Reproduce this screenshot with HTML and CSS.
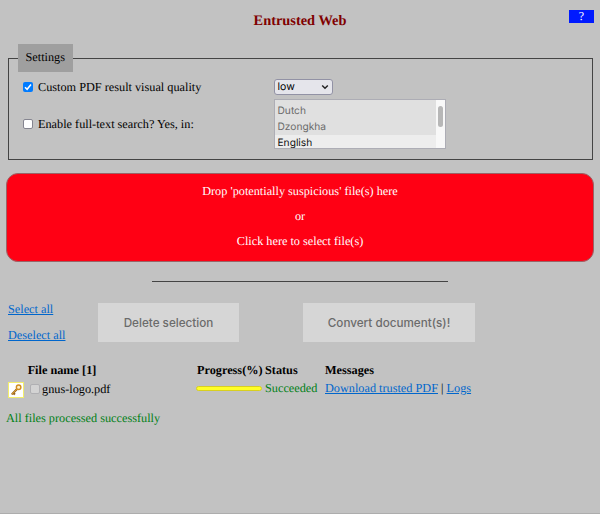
FILE: index.html
```html
<!DOCTYPE html>
<html lang="en">
<head>
<meta charset="utf-8">
<title>Entrusted Web</title>
<link rel="stylesheet" href="styles.css">
</head>
<body>
<header class="header">
  <h1>Entrusted Web</h1>
  <a class="help">?</a>
</header>
<fieldset class="settings">
  <legend>Settings</legend>
  <div class="setting quality">
    <label><span class="check on"><svg viewBox="0 0 10 10"><path d="M2 5.2 4.1 7.3 8 2.5"/></svg></span><span>Custom PDF result visual quality</span></label>
    <div class="select">low<svg viewBox="0 0 8 6"><path d="M1.2 1.4 4 4.3 6.8 1.4"/></svg></div>
  </div>
  <div class="setting languages">
    <label><span class="check"></span><span>Enable full-text search? Yes, in:</span></label>
    <div class="listbox">
      <div class="options"><div>Dutch</div><div>Dzongkha</div><div class="current">English</div></div>
      <div class="track"><div class="thumb"></div></div>
    </div>
  </div>
</fieldset>
<section class="dropzone">
  <p>Drop 'potentially suspicious' file(s) here</p>
  <p>or</p>
  <p>Click here to select file(s)</p>
</section>
<hr class="divider">
<section class="actions">
  <div class="selection"><a>Select all</a><a>Deselect all</a></div>
  <button class="delete" disabled>Delete selection</button>
  <button class="convert" disabled>Convert document(s)!</button>
</section>
<section class="files">
  <div class="row head"><span></span><b>File name [1]</b><b>Progress(%)</b><b>Status</b><b>Messages</b></div>
  <div class="row file">
    <span class="key"><svg viewBox="0 0 16 16"><path class="edge" d="M9.2 6.8 3.2 13M4.8 11.3l2 1.8"/><path class="shaft" d="M9.2 6.8 3.2 13"/><circle cx="11" cy="4.8" r="2.6"/></svg></span>
    <span class="name"><span class="check disabled"></span><span>gnus-logo.pdf</span></span>
    <span class="progress"></span>
    <span class="ok">Succeeded</span>
    <span class="links"><a>Download trusted PDF</a> | <a>Logs</a></span>
  </div>
</section>
<p class="ok summary">All files processed successfully</p>
</body>
</html>
```
FILE: styles.css
```css
* { box-sizing: border-box; }
html { background: #c2c2c2; }
body { margin: 0; height: 514px; overflow: hidden; border-bottom: 1px solid #adadad; background: #c2c2c2; color: #000; font: 12.25px/16px "Liberation Serif", serif; white-space: nowrap; text-rendering: geometricPrecision; }
p { margin: 0; }
a { color: #0066cc; text-decoration: underline; }
.header { display: grid; grid-template-columns: 1fr auto 1fr; height: 44px; padding: 10px 6px 0; }
h1 { grid-column: 2; margin: 3px 0 0; color: #800000; font-size: 14.4px; line-height: 16px; }
.help { justify-self: end; width: 25px; height: 13px; background: #001aff; color: #fff; font-size: 12px; line-height: 13px; text-align: center; text-decoration: none; }
.settings { margin: 0 7px 0 8px; padding: 0 14px; height: 116px; border: 1px solid #444; }
legend { margin-left: -5px; width: 55px; height: 28px; padding: 0 0 0 7.5px; background: #9f9f9f; line-height: 26px; }
.setting { display: grid; grid-template-columns: 250.5px auto; align-items: center; justify-content: start; }
.setting label { display: flex; align-items: center; gap: 5px; }
.quality { height: 18px; margin-top: 6px; }
.languages { height: 50px; margin-top: 3px; }
.check { flex: none; width: 10px; height: 10px; border: 1px solid #858590; border-radius: 2px; background: #fff; }
.check.on { border: 0; background: #007bff; }
.check svg { display: block; fill: none; stroke: #fff; stroke-width: 1.5; }
.select { display: flex; align-items: center; justify-content: space-between; width: 59px; height: 16px; padding: 0 3px; border: 1px solid #9292a5; border-radius: 3px; background: #e5e5eb; font: 10.5px/14px Inter, sans-serif; }
.select svg { width: 8px; height: 6px; fill: none; stroke: #222; stroke-width: 1.4; }
.listbox { display: flex; width: 172px; height: 50px; border: 1px solid #adadb5; background: #e0e0e0; font: 10.2px/16px Inter, sans-serif; color: #6b6b6b; overflow: hidden; }
.options { flex: 1; padding-top: 3px; }
.options div { padding-left: 3px; height: 16px; }
.options .current { background: #ededed; color: #111; }
.track { width: 9px; padding: 6px 2px; background: #f8f8f8; }
.thumb { width: 5px; height: 21px; border-radius: 3px; background: #b7b7b7; }
.dropzone { display: flex; flex-direction: column; align-items: center; gap: 9px; height: 89px; margin: 13px 6px 0; padding-top: 9px; border: 1px solid #996467; border-radius: 12px; background: #ff0014; color: #fff; }
.divider { width: 296px; height: 1px; margin: 19px auto 0 152px; border: 0; background: #444; }
.actions { display: flex; height: 39px; margin-top: 21px; padding-left: 8px; }
.selection { display: flex; flex-direction: column; gap: 10px; width: 90px; margin-top: -2px; }
button { height: 39px; padding: 1px 0 0; border: 0; background: #d6d6d6; color: #6b6b6b; font: 500 11.7px/39px Inter, sans-serif; }
.delete { width: 141px; }
.convert { width: 172px; margin-left: 64px; }
.files { margin-top: 20px; padding-left: 8px; }
.row { display: grid; grid-template-columns: 19px 170px 68px 60px 1fr; height: 16px; }
.head b:first-of-type { text-align: center; width: 70px; }
.file { align-items: center; margin-top: 1px; }
.key { width: 16px; height: 16px; margin-top: 3px; border: 1px solid #f3ee6c; background: #fff; }
.key svg { display: block; width: 14px; height: 14px; fill: #fff1cd; stroke: #d18e22; stroke-width: 1.6; }
.key .edge { stroke: #99631d; stroke-width: 2.4; }
.key .shaft { stroke: #e5aa35; stroke-width: 1; }
.name { display: flex; align-items: center; gap: 2px; padding-left: 3px; margin-top: 1px; }
.check.disabled { border-color: #b0b0b3; background: #d3d3d3; }
.progress { width: 66px; height: 5px; margin-left: -1px; border: 1px solid #d8cf20; border-radius: 3px; background: #ffff26; }
.file > .ok, .links { margin-top: -2px; }
.ok { color: #008015; }
.summary { margin: 15px 0 0 6px; }
```
